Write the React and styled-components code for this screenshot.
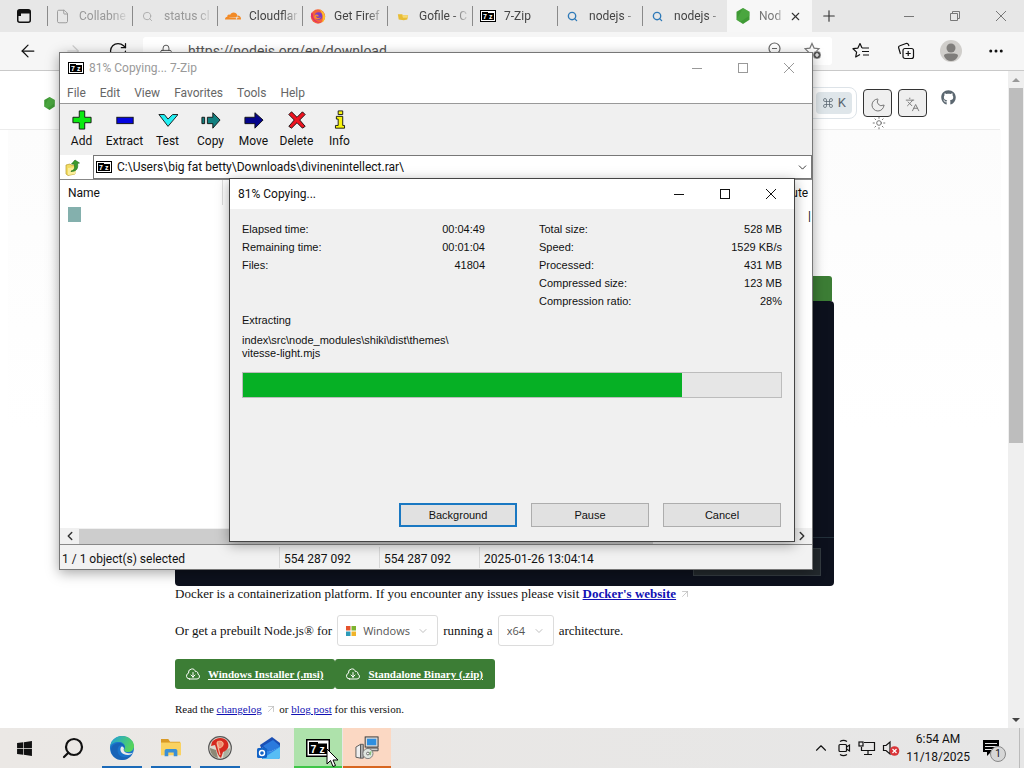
import React, { useState } from 'react';
import styled, { createGlobalStyle, css } from 'styled-components';
import {
    ArrowLeft, ArrowRight, ArrowUpRight, ChevronDown, ChevronLeft, ChevronRight, ChevronUp,
    Command, Ellipsis, File, Languages, Lock, Moon, Plus, RotateCw, Search, Sun, X,
} from 'lucide-react';
import { FaGithub, FaWindows } from 'react-icons/fa';
import { SiCloudflare } from 'react-icons/si';

const uiFont = 'Roboto, "Noto Sans", sans-serif';
const dialogFont = '"Liberation Sans", Arial, sans-serif';
const pageFont = '"Liberation Serif", "Times New Roman", serif';

// ICONS

const SevenZipIcon = ({ size = 16 }) => (
    <svg width={size} height={size * 0.75} viewBox="0 0 16 12">
        <rect x="0.5" y="0.5" width="15" height="11" fill="#fff" stroke="#000" />
        <rect x="2" y="2" width="6" height="8" fill="#000" />
        <rect x="8" y="3" width="6" height="7" fill="#000" />
        <text x="3" y="9" fill="#fff" fontSize="7" fontWeight="700" fontFamily="Liberation Sans">7</text>
        <text x="9" y="9" fill="#fff" fontSize="7" fontWeight="700" fontFamily="Liberation Sans">z</text>
    </svg>
);

const TabActionsIcon = () => (
    <svg width="14" height="14" viewBox="0 0 14 14">
        <rect x="0.75" y="0.75" width="12.5" height="12.5" rx="2" fill="none" stroke="#111" strokeWidth="1.5" />
        <path d="M1 1h12v3.500H4V7H1z" fill="#111" />
    </svg>
);

const FirefoxIcon = () => (
    <svg width="16" height="16" viewBox="0 0 16 16">
        <circle cx="8" cy="8.5" r="7.2" fill="#f4623a" />
        <path d="M9 1c4 2 6.500 5 6 9-.5 2-1.500 3.500-3 4.500C14 9 12 4 9 1z" fill="#fdbf2d" />
        <path d="M1 6c0 6 5 9.500 10 8.500C6 14 3 11 3 7l-1-3z" fill="#e02b6b" />
        <circle cx="8.5" cy="8" r="3.8" fill="#7a3fc4" />
        <path d="M5 7c2-1 3 0 4 1-1 .8-2.500.5-3 0 0 2 3 3 5 1-1 3-6 3-7 0z" fill="#fb8a2e" />
    </svg>
);

const GofileIcon = () => (
    <svg width="12" height="12" viewBox="0 0 14 14">
        <path d="M1 5h5l1 1h6l-1 5-4 1-6-1z" fill="#e8bd35" />
        <path d="M6 6h7l-1 3H7z" fill="#f6d975" />
    </svg>
);

const NodeIcon = ({ size = 16 }) => (
    <svg width={size} height={size} viewBox="0 0 16 16">
        <path d="M8 0l6.500 3.800v8L8 16l-6.500-4.200v-8z" fill="#3f9a35" />
        <path d="M8 0l6.500 3.800v4L5 14l-3.500-2.200z" fill="#56b249" opacity="0.5" />
    </svg>
);

const StarIcon = ({ variant }) => (
    <svg width="18" height="18" viewBox="0 0 18 18" fill="none" stroke={variant === 'add' ? '#777' : '#111'} strokeWidth="1.2">
        {variant === 'add' ? (
            <>
                <path d="M8 1.500l2.100 4.600 4.900.6-3.600 3.400.9 4.900L8 12.600 3.700 15l.9-4.900L1 6.700l4.900-.6z" />
                <circle cx="13" cy="13" r="4" fill="#555" stroke="#f7f7f7" strokeWidth="0.500" />
                <path d="M13 11v4M11 13h4" stroke="#fff" />
            </>
        ) : (
            <>
                <path d="M10 6L8 1.500 5.900 6.100 1 6.700l3.600 3.400-.9 4.900L8 12.600" strokeLinejoin="round" />
                <path d="M10 6h7M10 9.500h7M11 13h6" />
            </>
        )}
    </svg>
);

const CollectionsIcon = () => (
    <svg width="18" height="18" viewBox="0 0 18 18" fill="none" stroke="#111" strokeWidth="1.2">
        <rect x="6" y="6.500" width="10.500" height="10" rx="2" />
        <path d="M3.500 12L1.700 6c-.4-1 .2-2 1.200-2.300L9 1.500c1-.3 2 .1 2.400 1L12 4M11.200 9v5M8.700 11.500h5" />
    </svg>
);

const ProfileIcon = () => (
    <svg width="22" height="22" viewBox="0 0 22 22">
        <circle cx="11" cy="11" r="11" fill="#d0cecb" />
        <circle cx="11" cy="8" r="4.500" fill="#7f7d7b" />
        <path d="M4 16c0-2 2-2.500 7-2.500s7 .5 7 2.500c-1 3-4 5-7 5s-6-2-7-5z" fill="#7f7d7b" />
    </svg>
);

const ZoomOutIcon = () => (
    <svg width="16" height="16" viewBox="0 0 16 16" fill="none" stroke="#666" strokeWidth="1.200">
        <circle cx="7.500" cy="6.500" r="5.500" />
        <path d="M5 6.500h5M11.500 10.500L15 14" />
    </svg>
);

const CloudArrowIcon = () => (
    <svg width="16" height="16" viewBox="0 0 24 24" fill="none" stroke="#fff" strokeWidth="1.500" strokeLinecap="round" strokeLinejoin="round">
        <path d="M12 9.750v6.750m0 0-3-3m3 3 3-3m-8.250 6a4.500 4.500 0 0 1-1.410-8.775 5.250 5.250 0 0 1 10.233-2.330 3 3 0 0 1 3.758 3.848A3.752 3.752 0 0 1 18 19.500H6.750Z" />
    </svg>
);

const toolIcons = {
    Add: <path d="M8 1h6v7h7v6h-7v7H8v-7H1V8h7z" fill="#0ceb12" />,
    Extract: <rect x="2" y="8" width="18" height="7" fill="#0404e0" />,
    Test: <path d="M1 5h6l4 5 5-5h6L11 18z" fill="#22f0f4" />,
    Copy: <path d="M1 8h3v7H1zM7 8h6V3l8 8-8 9v-5H7z" fill="#128080" />,
    Move: <path d="M1 8h11V3l9 8-9 9v-5H1z" fill="#04048c" />,
    Delete: <path d="M2 5l3-3 6 6 6-6 3 3-6 6 6 7-3 2-6-6-6 6-3-2 6-7z" fill="#ee1420" />,
    Info: <path d="M9 1h5v4H9zM7 7h7v10h2v3H6v-3h3v-7H7z" fill="#f8f40c" />,
};

const ToolIcon = ({ name }) => (
    <svg width="20" height="20" viewBox="0 0 22 22" stroke="#111" strokeWidth="1">
        {toolIcons[name]}
    </svg>
);

const FolderUpIcon = () => (
    <svg width="16" height="17" viewBox="0 0 16 17">
        <path d="M1 6l4-1 1 1h4v9l-7 1.500L1 15z" fill="#f2dc62" stroke="#b99c2c" strokeWidth="0.700" />
        <path d="M3 9l9-1-2 7-7 1z" fill="#fbee9a" />
        <path d="M6 12c4-1 4-4 3-7H6.500L10 1l4.500 3-2 .5c1 5-1 8-6.500 8z" fill="#3b9b2c" stroke="#1d6a17" strokeWidth="0.600" />
    </svg>
);

const GlyphIcon = ({ kind }) => (
    <svg width="12" height="12" viewBox="0 0 12 12" fill="none" stroke="currentColor">
        {kind === 'Minimize' && <path d="M1 6.500h10" />}
        {kind === 'Maximize' && <rect x="1.500" y="1.500" width="9" height="9" />}
        {kind === 'Restore' && <path d="M3.500 3.500v-2h7v7h-2M1.500 3.500h7v7h-7z" />}
        {kind === 'Close' && <path d="M1 1l10 10M11 1L1 11" />}
    </svg>
);

const WindowsLogo = () => (
    <svg width="10" height="10" viewBox="0 0 10 10">
        <path d="M0 0h4.500v4.500H0z" fill="#e5532d" />
        <path d="M5.500 0H10v4.500H5.500z" fill="#7eb32f" />
        <path d="M0 5.500h4.500V10H0z" fill="#2d9bb8" />
        <path d="M5.500 5.500H10V10H5.500z" fill="#f0b429" />
    </svg>
);

const EdgeIcon = () => (
    <svg width="24" height="24" viewBox="0 0 24 24">
        <defs>
            <linearGradient id="edgeTop" x1="0" y1="0" x2="1" y2="0.400">
                <stop offset="0" stopColor="#1d9fe0" />
                <stop offset="1" stopColor="#55d45c" />
            </linearGradient>
        </defs>
        <circle cx="12" cy="12" r="12" fill="#1a74cc" />
        <path d="M0 11C1 4 6 0 12 0c7 0 12 5 12 10 0 4-3 6-6 6-2 0-4-.5-4-2 0-1 1-1 1-3 0-3-3-5-6-5-5 0-8 2-9 5z" fill="url(#edgeTop)" />
        <path d="M9 10c-3 4-1 10 4 11 4 .8 7-1 9-3-2 4-6 6-10 6C5 24 1 19 1 14c0-4 4-7 8-7 3 0 6 2 6 5-1-2-4-4-6-2z" fill="#1559a8" opacity="0.600" />
        <path d="M11 11c-2 4 1 8 7 8 2.500 0 4-1 5-2.500-2 1-4 1-6 .5-3-.8-4-3-3-5-.8-1.500-2.500-2-3-1z" fill="#eceae8" />
    </svg>
);

const ExplorerIcon = () => (
    <svg width="22" height="20" viewBox="0 0 24 22">
        <path d="M1 1h8l2 3h11v5H1z" fill="#d99a26" />
        <path d="M1 5h22v14H1z" fill="#fad261" />
        <path d="M5 20v-6c0-1 1-2 2-2h10c1 0 2 1 2 2v6h-4v-4H9v4z" fill="#3a8fd6" />
    </svg>
);

const PIcon = () => (
    <svg width="24" height="24" viewBox="0 0 24 24">
        <circle cx="12" cy="12" r="11.300" fill="#ddd9cf" stroke="#555" strokeWidth="1.200" />
        <path d="M2 12l6 2 2 8c-5-1-8-5-8-10z" fill="#8d8876" />
        <path d="M15 22l1-7 6-3c0 5-3 9-7 10z" fill="#a9b0a0" />
        <path d="M4 6c4-5 12-5 15-1 3 5 1 9-4 11l-2 6c-3-2-4-6-5-10l-1-3-4 1z" fill="#d5291f" />
        <path d="M9 6c4-2 7 0 6 3-1 2-2 3-4 3z" fill="#f08a70" stroke="#f2d7a6" strokeWidth="0.800" />
        <path d="M9 7l3 12" stroke="#f2b8a0" strokeWidth="1.200" />
    </svg>
);

const OutlookIcon = () => (
    <svg width="24" height="23" viewBox="0 0 24 23">
        <path d="M3 8L15 0l8 6v4L6 17z" fill="#1a4fb4" />
        <path d="M6 9l10-6 7 6-10 6z" fill="#2a7ade" />
        <path d="M5 10l8 5 10-6v11c0 1.500-1 2-2 2H5z" fill="#2e86e8" />
        <path d="M5 22L23 10v10c0 1-1 2-2 2z" fill="#57bdf5" />
        <rect x="0" y="11" width="10" height="10" rx="1.500" fill="#1263c6" />
        <circle cx="5" cy="16" r="2.500" fill="none" stroke="#fff" strokeWidth="1.400" />
    </svg>
);

const InstallerIcon = () => (
    <svg width="24" height="24" viewBox="0 0 26 26">
        <path d="M1 12l5-3v15l-5-1z" fill="#eee" stroke="#555" />
        <path d="M6 9h3v15H6z" fill="#b5b5b5" stroke="#555" />
        <rect x="11" y="1" width="14" height="11" fill="#d9d9d9" stroke="#333" />
        <rect x="13" y="3" width="10" height="7" fill="#2f8fe0" />
        <path d="M13 13h12v3H13z" fill="#cfcfcf" stroke="#444" />
        <circle cx="14" cy="19" r="5.500" fill="#dfe6e0" stroke="#777" />
        <path d="M14 19l4-3-1 5z" fill="#86c07c" />
        <circle cx="14" cy="19" r="1.500" fill="#fff" stroke="#666" />
    </svg>
);

const CameraTrayIcon = () => (
    <svg width="16" height="18" viewBox="0 0 16 18" fill="none" stroke="#111" strokeWidth="1.200">
        <path d="M4 2.500c2-1.300 5-1.300 7 0M4 15.500c2 1.300 5 1.300 7 0M10.500 8l3-2v6l-3-2" />
        <rect x="3" y="5.500" width="7.500" height="7" rx="1" />
    </svg>
);

const NetworkTrayIcon = () => (
    <svg width="18" height="16" viewBox="0 0 18 16" fill="none" stroke="#111" strokeWidth="1.200">
        <path d="M6 2.500h10.500v8H3.500V7M10 10.500V14M6 14.500h8" />
        <rect x="1" y="2" width="4" height="4" />
    </svg>
);

const VolumeTrayIcon = () => (
    <svg width="18" height="16" viewBox="0 0 18 16">
        <path d="M1.500 5.500H4l4-3.500v12l-4-3.500H1.500z" fill="none" stroke="#111" strokeWidth="1.200" />
        <circle cx="12.500" cy="11" r="4.800" fill="#d93438" />
        <path d="M10.500 9l4 4M14.500 9l-4 4" stroke="#fff" strokeWidth="1.200" />
    </svg>
);

const NotificationIcon = () => (
    <svg width="18" height="18" viewBox="0 0 18 18">
        <path d="M1 1h16v12H9l-4 4v-4H1z" fill="#000" />
        <path d="M3 4.500h12M3 7.500h12M3 10.500h7" stroke="#e6e6e6" />
    </svg>
);

const CursorIcon = () => (
    <svg width="13" height="20" viewBox="0 0 13 20">
        <path d="M1 1v15l3.500-3.500L7 18.500l2.500-1L7 12h5z" fill="#fff" stroke="#000" />
    </svg>
);

// DATA

const tabs = [
    { title: 'Collabne', icon: <File size={15} strokeWidth={1.5} color="#999" />, color: '#999' },
    { title: 'status cl', icon: <Search size={11} color="#aaa" />, color: '#999' },
    { title: 'Cloudflar', icon: <SiCloudflare size={16} color="#f28a26" />, color: '#444' },
    { title: 'Get Firef', icon: <FirefoxIcon />, color: '#444' },
    { title: 'Gofile - C', icon: <GofileIcon />, color: '#444' },
    { title: '7-Zip', icon: <SevenZipIcon />, color: '#444' },
    { title: 'nodejs -', icon: <Search size={11} strokeWidth={3} color="#2f7ab8" />, color: '#444' },
    { title: 'nodejs -', icon: <Search size={11} strokeWidth={3} color="#2f7ab8" />, color: '#444' },
];

const menus = ['File', 'Edit', 'View', 'Favorites', 'Tools', 'Help'];
const tools = ['Add', 'Extract', 'Test', 'Copy', 'Move', 'Delete', 'Info'];

const timeStats = [
    ['Elapsed time:', '00:04:49'],
    ['Remaining time:', '00:01:04'],
    ['Files:', '41804'],
];

const sizeStats = [
    ['Total size:', '528 MB'],
    ['Speed:', '1529 KB/s'],
    ['Processed:', '431 MB'],
    ['Compressed size:', '123 MB'],
    ['Compression ratio:', '28%'],
];

const taskbarApps = [
    { name: 'Start', icon: <FaWindows size={17} /> },
    { name: 'Search', icon: <Search size={24} strokeWidth={2.2} style={{ transform: 'scaleX(-1)' }} /> },
    { name: 'Edge', icon: <EdgeIcon />, line: '#1b6ab8' },
    { name: 'File Explorer', icon: <ExplorerIcon />, line: '#1b6ab8' },
    { name: 'Player', icon: <PIcon />, line: '#1b6ab8' },
    { name: 'Outlook', icon: <OutlookIcon /> },
    { name: '7-Zip', icon: <SevenZipIcon size={24} />, line: '#3fc648', fill: '#aee2ab' },
    { name: 'Installer', icon: <InstallerIcon />, line: '#d8661f', fill: '#fbd8c3' },
];

// COMPONENTS

const WindowControls = ({ middle = 'Maximize' }) => (
    <Controls>
        {['Minimize', middle, 'Close'].map(kind => (
            <ControlButton key={kind} aria-label={kind}><GlyphIcon kind={kind} /></ControlButton>
        ))}
    </Controls>
);

const Stats = ({ rows }) => (
    <StatList>
        {rows.map(([label, value]) => (
            <StatRow key={label}>
                <dt>{label}</dt>
                <dd>{value}</dd>
            </StatRow>
        ))}
    </StatList>
);

const Browser = () => {
    const [os, setOs] = useState('Windows')
    const [arch, setArch] = useState('x64')

    return (
        <BrowserWindow>
            <TabStrip>
                <TabActions aria-label="Tab actions"><TabActionsIcon /></TabActions>
                {tabs.map((tab, i) => (
                    <Tab key={i} $color={tab.color}>
                        <TabIcon>{tab.icon}</TabIcon>
                        <TabTitle>{tab.title}</TabTitle>
                    </Tab>
                ))}
                <Tab $active $color="#777">
                    <TabIcon><NodeIcon /></TabIcon>
                    <TabTitle>Nod</TabTitle>
                    <TabClose aria-label="Close tab"><X size={13} /></TabClose>
                </Tab>
                <NewTab aria-label="New tab"><Plus size={18} strokeWidth={1.5} /></NewTab>
                <WindowControls middle="Restore" />
            </TabStrip>

            <NavBar>
                <NavButton aria-label="Back"><ArrowLeft size={20} strokeWidth={1.5} /></NavButton>
                <NavButton aria-label="Forward" disabled><ArrowRight size={18} strokeWidth={1.5} /></NavButton>
                <NavButton aria-label="Reload"><RotateCw size={20} strokeWidth={1.5} /></NavButton>
                <AddressBar>
                    <Lock size={14} strokeWidth={1.5} />
                    <AddressInput aria-label="Address" defaultValue="https://nodejs.org/en/download" />
                    <AddressIcons>
                        <ZoomOutIcon />
                        <StarIcon variant="add" />
                    </AddressIcons>
                </AddressBar>
                <NavButton aria-label="Favorites"><StarIcon /></NavButton>
                <NavButton aria-label="Collections"><CollectionsIcon /></NavButton>
                <NavButton aria-label="Profile"><ProfileIcon /></NavButton>
                <NavButton aria-label="More"><Ellipsis size={18} /></NavButton>
            </NavBar>

            <Viewport>
                <Page>
                    <SiteHeader>
                        <NodeIcon size={13} />
                        <HeaderActions>
                            <SearchBox aria-label="Search">
                                <Shortcut><Command size={12} strokeWidth={1.5} />K</Shortcut>
                            </SearchBox>
                            <ThemeSwitch>
                                <SquareButton aria-label="Dark theme"><Moon size={16} strokeWidth={1.5} /></SquareButton>
                                <LightIcon><Sun size={14} strokeWidth={1.5} /></LightIcon>
                            </ThemeSwitch>
                            <SquareButton aria-label="Language"><Languages size={15} strokeWidth={1.5} /></SquareButton>
                            <GithubLink href="#github" aria-label="GitHub"><FaGithub size={15} /></GithubLink>
                        </HeaderActions>
                    </SiteHeader>

                    <Main>
                        <Article>
                            <CodeTabs />
                            <CodeBlock>
                                <CodeFooter><CopyArea /></CodeFooter>
                            </CodeBlock>
                            <Text>
                                Docker is a containerization platform. If you encounter any issues please visit{' '}
                                <a href="#docker"><b>Docker's website</b></a> <Outbound />
                            </Text>
                            <Prebuilt>
                                <span>Or get a prebuilt Node.js® for</span>
                                <SelectBox>
                                    <WindowsLogo />
                                    <select aria-label="Operating system" value={os} onChange={e => setOs(e.target.value)}>
                                        <option>Windows</option>
                                    </select>
                                    <ChevronDown size={12} strokeWidth={1.5} />
                                </SelectBox>
                                <span>running a</span>
                                <SelectBox>
                                    <select aria-label="Architecture" value={arch} onChange={e => setArch(e.target.value)}>
                                        <option>x64</option>
                                    </select>
                                    <ChevronDown size={12} strokeWidth={1.5} />
                                </SelectBox>
                                <span>architecture.</span>
                            </Prebuilt>
                            <Downloads>
                                <DownloadLink href="#msi"><CloudArrowIcon /><u>Windows Installer (.msi)</u></DownloadLink>
                                <DownloadLink href="#zip"><CloudArrowIcon /><u>Standalone Binary (.zip)</u></DownloadLink>
                            </Downloads>
                            <Text $small>
                                Read the <a href="#changelog">changelog</a> <Outbound /> or <a href="#blog">blog post</a> for this version.
                            </Text>
                        </Article>
                    </Main>
                </Page>
                <Scrollbar>
                    <ScrollArrow $up />
                    <ScrollThumb />
                    <ScrollArrow />
                </Scrollbar>
            </Viewport>
        </BrowserWindow>
    )
}

const FileManager = () => (
    <ManagerWindow>
        <TitleBar $inactive>
            <SevenZipIcon />
            <span>81% Copying... 7-Zip</span>
            <WindowControls />
        </TitleBar>
        <MenuBar>
            {menus.map(menu => <MenuButton key={menu}>{menu}</MenuButton>)}
        </MenuBar>
        <ToolBar>
            {tools.map(tool => (
                <ToolButton key={tool}>
                    <ToolIcon name={tool} />
                    {tool}
                </ToolButton>
            ))}
        </ToolBar>
        <PathBar>
            <UpButton aria-label="Up one level"><FolderUpIcon /></UpButton>
            <PathBox>
                <SevenZipIcon />
                <PathInput aria-label="Path" defaultValue={'C:\\Users\\big fat betty\\Downloads\\divinenintellect.rar\\'} />
                <ChevronDown size={13} strokeWidth={1.5} />
            </PathBox>
        </PathBar>
        <FileArea>
            <FileTable>
                <thead>
                    <tr><NameHead>Name</NameHead><th /><LastHead>Attribute</LastHead></tr>
                </thead>
                <tbody>
                    <tr><td><FolderMark /></td><td /><LastCell>|</LastCell></tr>
                </tbody>
            </FileTable>
        </FileArea>
        <HorizontalScroll>
            <ChevronLeft size={14} strokeWidth={2.5} />
            <HorizontalThumb />
            <ChevronRight size={14} strokeWidth={2.5} />
        </HorizontalScroll>
        <StatusBar>
            <StatusCell $first>1 / 1 object(s) selected</StatusCell>
            <StatusCell>554 287 092</StatusCell>
            <StatusCell>554 287 092</StatusCell>
            <StatusCell>2025-01-26 13:04:14</StatusCell>
        </StatusBar>
    </ManagerWindow>
)

const CopyDialog = () => {
    const processed = 431
    const total = 528

    return (
        <DialogWindow role="dialog" aria-label="81% Copying...">
            <TitleBar>
                <span>81% Copying...</span>
                <WindowControls />
            </TitleBar>
            <DialogBody>
                <StatColumns>
                    <Stats rows={timeStats} />
                    <Stats rows={sizeStats} />
                </StatColumns>
                <StatusLine>Extracting</StatusLine>
                <FilePath>index\src\node_modules\shiki\dist\themes\<br />vitesse-light.mjs</FilePath>
                <Progress role="progressbar" aria-valuenow={81} aria-label="Copying">
                    <ProgressFill style={{ width: `${(processed / total) * 100}%` }} />
                </Progress>
                <DialogButtons>
                    <DialogButton $focused>Background</DialogButton>
                    <DialogButton>Pause</DialogButton>
                    <DialogButton>Cancel</DialogButton>
                </DialogButtons>
            </DialogBody>
        </DialogWindow>
    )
}

const App = () => (
    <Desktop>
        <GlobalStyle />
        <Browser />
        <TaskBar>
            {taskbarApps.map(app => (
                <TaskButton key={app.name} aria-label={app.name} $line={app.line} $fill={app.fill}>{app.icon}</TaskButton>
            ))}
            <Tray>
                <ChevronUp size={18} strokeWidth={1.5} />
                <CameraTrayIcon />
                <NetworkTrayIcon />
                <VolumeTrayIcon />
                <Clock>
                    <span>6:54 AM</span>
                    <span>11/18/2025</span>
                </Clock>
                <Notifications aria-label="Notifications">
                    <NotificationIcon />
                    <Badge>1</Badge>
                </Notifications>
                <ShowDesktop />
            </Tray>
        </TaskBar>
        <FileManager />
        <CopyDialog />
        <Cursor><CursorIcon /></Cursor>
    </Desktop>
)

const GlobalStyle = createGlobalStyle`
    * {
        box-sizing: border-box;
    }

    body {
        margin: 0;
        font-family: ${uiFont};
        font-size: 12px;
        overflow: hidden;
    }

    button, input, select {
        font: inherit;
        color: inherit;
        border: none;
        background: none;
        padding: 0;
        margin: 0;
        outline: none;
    }

    svg {
        flex-shrink: 0;
    }
`

const Desktop = styled.div`
    position: relative;
    display: flex;
    flex-direction: column;
    height: 100vh;
    overflow: hidden;
`

const BrowserWindow = styled.div`
    flex: 1;
    min-height: 0;
    display: flex;
    flex-direction: column;
    background: #fff;
`

const TabStrip = styled.div`
    display: flex;
    align-items: center;
    height: 32px;
    background: #e7e7e7;
    color: #777;
`

const TabActions = styled.button`
    display: flex;
    justify-content: center;
    width: 47px;
`

const Tab = styled.div`
    display: flex;
    align-items: center;
    flex: 0 1 85px;
    min-width: 0;
    height: ${props => props.$active ? '32px' : '20px'};
    padding: 0 2px 0 6px;
    color: ${props => props.$color};
    background: ${props => props.$active ? '#f7f7f7' : 'none'};
    border-left: 1px solid ${props => props.$active ? '#f7f7f7' : '#8a8a8a'};
`

const TabIcon = styled.span`
    display: flex;
    justify-content: center;
    flex: 0 0 17px;
    margin-right: 8px;
`

const TabTitle = styled.span`
    flex: 1;
    white-space: nowrap;
    mask-image: linear-gradient(to right, #000 65%, transparent);
`

const TabClose = styled.button`
    display: flex;
    padding: 0 8px 0 4px;
    color: #333;
`

const NewTab = styled.button`
    display: flex;
    justify-content: center;
    width: 34px;
    color: #333;
`

const Controls = styled.div`
    display: flex;
    align-self: stretch;
    margin-left: auto;
`

const ControlButton = styled.button`
    display: flex;
    align-items: center;
    justify-content: center;
    width: 46px;
`

const NavBar = styled.div`
    display: flex;
    align-items: center;
    height: 39px;
    padding: 0 6px 0 5px;
    background: #f6f6f6;
    border-bottom: 1px solid #c9c9c9;
`

const NavButton = styled.button`
    display: flex;
    align-items: center;
    justify-content: center;
    width: 45px;
    color: #111;

    &:disabled {
        color: #ccc;
    }
`

const AddressBar = styled.div`
    display: flex;
    align-items: center;
    flex: 1;
    gap: 15px;
    height: 28px;
    margin: 0 6px 0 3px;
    padding: 0 10px 0 16px;
    border-radius: 3px;
    background: #fff;
    color: #444;
`

const AddressInput = styled.input`
    flex: 1;
    font-size: 14px;
    color: #555;
`

const AddressIcons = styled.span`
    display: flex;
    gap: 21px;
`

const Viewport = styled.div`
    flex: 1;
    min-height: 0;
    display: flex;
`

const Page = styled.div`
    flex: 1;
    overflow: hidden;
    font-family: ${pageFont};
    font-size: 13px;
    color: #111;

    a {
        color: #1212b4;
    }
`

const SiteHeader = styled.header`
    display: flex;
    align-items: center;
    justify-content: space-between;
    height: 59px;
    margin-right: 8px;
    padding: 6px 44px 0 43px;
    border-bottom: 1px solid #ececec;
`

const HeaderActions = styled.div`
    display: flex;
    align-items: center;
    gap: 6px;
    font-family: ${uiFont};
    color: #5a6570;
`

const SearchBox = styled.button`
    display: flex;
    justify-content: flex-end;
    width: 180px;
    padding: 4px;
    border: 1px solid #dde3e8;
    border-radius: 8px;
`

const Shortcut = styled.span`
    display: flex;
    align-items: center;
    gap: 4px;
    padding: 2px 6px;
    border-radius: 4px;
    background: #dfe6ea;
    line-height: 18px;
`

const ThemeSwitch = styled.div`
    position: relative;
`

const SquareButton = styled.button`
    display: flex;
    align-items: center;
    justify-content: center;
    width: 29px;
    height: 28px;
    padding-top: 3px;
    border: 1px solid #333;
    border-radius: 4px;
    background: #efefef;
    color: #777;
`

const LightIcon = styled.span`
    position: absolute;
    top: 27px;
    left: 9px;
    color: #666;
`

const GithubLink = styled.a`
    display: flex;
    padding: 0 0 12px 8px;

    svg {
        fill: #5b6770;
    }
`

const Main = styled.main`
    margin: 0 7px 0 8px;
    padding-top: 146px;
    background: linear-gradient(#fcfcfc, #fff 300px);
`

const Article = styled.article`
    display: flex;
    flex-direction: column;
    max-width: 659px;
    margin: 0 auto;
`

const CodeTabs = styled.div`
    height: 25px;
    margin-right: 2px;
    border-radius: 0 3px 0 0;
    background: #3c7d35;
`

const CodeBlock = styled.div`
    display: flex;
    flex-direction: column;
    justify-content: flex-end;
    height: 285px;
    border-radius: 4px;
    background: #0d111d;
`

const CodeFooter = styled.div`
    display: flex;
    justify-content: flex-end;
    padding: 10px 13px;
    border-top: 1px solid #23303a;
`

const CopyArea = styled.div`
    width: 128px;
    height: 28px;
    border: 1px solid #343b40;
    background: #23292d;
`

const Text = styled.p`
    margin: 0;
    font-size: ${props => props.$small ? '11px' : '13px'};
    line-height: 16px;
`

const Outbound = styled(ArrowUpRight).attrs({ size: 12, strokeWidth: 1.2 })`
    color: #aaa;
    vertical-align: -2px;
`

const Prebuilt = styled.div`
    display: flex;
    align-items: center;
    gap: 5px;
    margin: 13px 0;
`

const SelectBox = styled.label`
    display: flex;
    align-items: center;
    gap: 7px;
    height: 31px;
    padding: 0 8px;
    border: 1px solid #dcdcdc;
    border-radius: 3px;
    font-family: "Open Sans", sans-serif;
    font-size: 11px;
    color: #555;

    > svg:last-child {
        color: #aaa;
    }

    select {
        appearance: none;
    }
`

const Downloads = styled.div`
    display: flex;
    margin-bottom: 12px;
`

const DownloadLink = styled.a`
    display: flex;
    align-items: center;
    gap: 7px;
    height: 30px;
    padding: 0 12px 0 10px;
    border-radius: 3px;
    background: #3c7d35;
    font-size: 11px;
    font-weight: 700;
    text-decoration: none;

    ${Page} & {
        color: #fff;
    }
`

const Scrollbar = styled.div`
    display: flex;
    flex-direction: column;
    justify-content: space-between;
    width: 16px;
    padding: 0 1px;
    background: #efefef;
`

const ScrollArrow = styled.span`
    display: block;
    height: 17px;

    &::after {
        content: '';
        display: block;
        width: 0;
        margin: 7px auto 0;
        border: 4px solid transparent;
        border-top-width: ${props => props.$up ? '0' : '4px'};
        border-bottom-width: ${props => props.$up ? '4px' : '0'};
        ${props => props.$up ? css`border-bottom-color: #999;` : css`border-top-color: #444;`}
    }
`

const ScrollThumb = styled.span`
    height: 54%;
    margin-bottom: auto;
    background: #bdbdbd;
`

const desktopWindow = css`
    position: absolute;
    display: flex;
    flex-direction: column;
    border: 1px solid #777;
    box-shadow: 0 3px 12px rgba(0, 0, 0, 0.35);
    overflow: hidden;
`

const ManagerWindow = styled.section`
    ${desktopWindow}
    top: 52px;
    left: 59px;
    width: 754px;
    background: #f0f0f0;
`

const DialogWindow = styled.section`
    ${desktopWindow}
    top: 178px;
    left: 229px;
    width: 566px;
    border-color: #444;
    background: #f0f0f0;
`

const TitleBar = styled.div`
    display: flex;
    align-items: center;
    gap: 5px;
    height: 30px;
    padding-left: 8px;
    background: #fff;
    color: ${props => props.$inactive ? '#999' : '#111'};
`

const MenuBar = styled.div`
    display: flex;
    height: 21px;
    padding-bottom: 1px;
    background: #fff;
    border-bottom: 1px solid #999;
    color: #666;
`

const MenuButton = styled.button`
    padding: 0 7px;
`

const ToolBar = styled.div`
    display: flex;
    padding: 6px 0 3px;
`

const ToolButton = styled.button`
    display: flex;
    flex-direction: column;
    align-items: center;
    width: 43px;
    line-height: 22px;
    color: #111;
`

const PathBar = styled.div`
    display: flex;
    gap: 1px;
    height: 24px;
    background: #fff;
`

const UpButton = styled.button`
    display: flex;
    align-items: center;
    padding: 0 11px 0 5px;
`

const PathBox = styled.div`
    display: flex;
    align-items: center;
    flex: 1;
    gap: 5px;
    padding: 0 2px;
    border: 1px solid #777;
    color: #111;
`

const PathInput = styled.input`
    flex: 1;
`

const FileArea = styled.div`
    height: 349px;
    overflow: hidden;
    border-top: 1px solid #888;
    background: #fff;
`

const FileTable = styled.table`
    width: 100%;
    table-layout: fixed;
    border-collapse: collapse;
    color: #111;

    th, td {
        height: 22px;
        padding: 0 0 0 8px;
        font-weight: 400;
        text-align: left;
        white-space: nowrap;
    }

    th {
        height: 25px;
    }
`

const NameHead = styled.th`
    width: 162px;
    border-right: 1px solid #ddd;
`

const LastHead = styled.th`
    width: 58px;
`

const LastCell = styled.td`
    && {
        padding-left: 54px;
    }
`

const FolderMark = styled.span`
    display: block;
    width: 13px;
    height: 15px;
    margin-bottom: 3px;
    background: #84b0ad;
`

const HorizontalScroll = styled.div`
    display: flex;
    align-items: center;
    height: 16px;
    padding: 0 3px;
    background: #f0f0f0;
    color: #333;
`

const HorizontalThumb = styled.span`
    width: 77%;
    height: 15px;
    margin: 0 auto 0 2px;
    background: #cdcdcd;
`

const StatusBar = styled.div`
    display: flex;
    height: 25px;
    padding: 2px 0 1px;
    border-top: 1px solid #888;
    background: #f2f2f2;
    color: #111;
`

const StatusCell = styled.div`
    flex: 0 0 ${props => props.$first ? '219px' : '100px'};
    padding-left: ${props => props.$first ? '1px' : '4px'};
    border-left: 1px solid ${props => props.$first ? 'transparent' : '#d8d8d8'};
    line-height: 24px;
    white-space: nowrap;
`

const DialogBody = styled.div`
    padding: 11px 12px 14px;
    font-family: ${dialogFont};
    font-size: 11px;
    color: #111;
`

const StatColumns = styled.div`
    display: grid;
    grid-template-columns: 1fr 1fr;
    gap: 54px;
`

const StatList = styled.dl`
    margin: 0;
`

const StatRow = styled.div`
    display: flex;
    justify-content: space-between;
    line-height: 18px;

    dd {
        margin: 0;
    }
`

const StatusLine = styled.div`
    line-height: 20px;
`

const FilePath = styled.div`
    margin: 4px 0 12px;
    line-height: 13px;
`

const Progress = styled.div`
    height: 26px;
    border: 1px solid #bcbcbc;
    background: #e6e6e6;
`

const ProgressFill = styled.div`
    height: 100%;
    background: #06b025;
`

const DialogButtons = styled.div`
    display: flex;
    justify-content: flex-end;
    gap: 14px;
    margin: 105px 1px 0 0;
`

const DialogButton = styled.button`
    width: 118px;
    height: 24px;
    border: ${props => props.$focused ? '2px solid #1a78c2' : '1px solid #adadad'};
    background: #e1e1e1;
`

const TaskBar = styled.div`
    display: flex;
    gap: 1px;
    height: 40px;
    background: linear-gradient(to right, #ebe8e5, #e6e6e6);
`

const TaskButton = styled.button`
    display: flex;
    align-items: center;
    justify-content: center;
    width: 48px;
    background: ${props => props.$fill || 'none'};
    color: #111;
    position: relative;

    &::after {
        content: '';
        position: absolute;
        bottom: 0;
        left: ${props => props.$fill ? '0' : '4px'};
        right: ${props => props.$fill ? '0' : '4px'};
        height: 2px;
        background: ${props => props.$line || 'none'};
    }
`

const Tray = styled.div`
    display: flex;
    align-items: center;
    gap: 6px;
    margin-left: auto;
    color: #111;
`

const Clock = styled.div`
    display: flex;
    flex-direction: column;
    align-items: center;
    line-height: 18px;
`

const Notifications = styled.button`
    display: flex;
    position: relative;
    margin: 0 13px 0 6px;
`

const Badge = styled.span`
    position: absolute;
    top: 7px;
    left: 8px;
    width: 16px;
    height: 16px;
    border: 1px solid #888;
    border-radius: 50%;
    background: #d6d6d6;
    font-size: 10px;
    line-height: 14px;
    text-align: center;
`

const ShowDesktop = styled.span`
    align-self: stretch;
    width: 5px;
    border-left: 1px solid #bbb;
`

const Cursor = styled.div`
    position: absolute;
    top: 748px;
    left: 326px;
`

export default App;
